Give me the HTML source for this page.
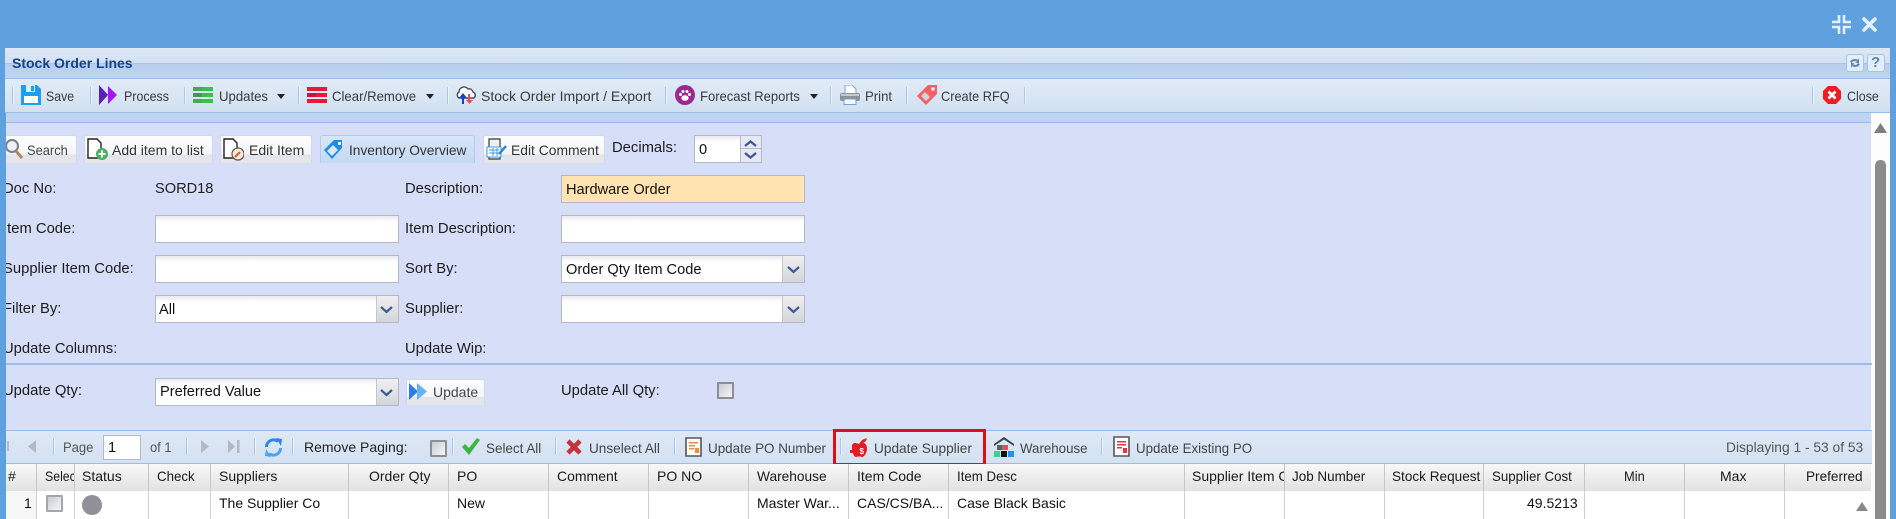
<!DOCTYPE html>
<html><head><meta charset="utf-8"><title>Stock Order Lines</title>
<style>
*{box-sizing:border-box}
html,body{margin:0;padding:0}
body{width:1896px;height:519px;position:relative;overflow:hidden;background:#5fa1df;font-family:"Liberation Sans",Arial,sans-serif;font-size:14px;color:#333}
div,span,svg{position:absolute}
.t{white-space:nowrap;line-height:18px;height:18px;transform-origin:0 50%}
.tb{color:#3b3b3b;font-size:14px}
.f{color:#1c1c1c;font-size:14.8px}
.v{color:#111;font-size:14.6px}
.h{color:#1a1a1a;font-size:14px;top:467px}
.r{color:#111;font-size:14px;top:494px}
.sep{width:1px;background:#a8c6ec;box-shadow:1px 0 0 #eef4fb}
.btn{top:135px;height:28px;border:1px solid #d3d9ea;border-bottom:0;border-radius:3px 3px 0 0;background:linear-gradient(#fdfdfe 0,#f4f5f8 68%,#e2e4ea 69%,#e6e7ea 100%)}
.inp{background:linear-gradient(#e8eaee 0,#fff 6px);border:1px solid #b5b8c8;height:28px}
.trg{width:22px;border-left:1px solid #c4c6cf;top:0;bottom:0;right:0;background:linear-gradient(#f0f0f1,#d4d5d9)}
.grid{top:464px;height:27px;background:linear-gradient(#f8f8f8,#e2e2e2);border-right:1px solid #c6c6c6}
.cell{top:491px;height:28px;background:#fff;border-right:1px solid #d0d0d0}
</style></head><body>

<!-- window chrome -->
<div style="left:5px;top:48px;width:1885px;height:1px;background:#dfeaf7"></div>
<div style="left:5px;top:49px;width:1885px;height:14px;background:linear-gradient(#dbe7f6,#d2e1f3)"></div>
<div style="left:5px;top:63px;width:1885px;height:15px;background:linear-gradient(#b8ceed,#c0d4f0);border-top:1px solid #a9c4e8"></div>
<div style="left:5px;top:78px;width:1885px;height:35px;background:linear-gradient(#e1ebf7,#d1e0f1);border-top:1px solid #99bdea;border-bottom:1px solid #99bdea"></div>
<div style="left:5px;top:113px;width:1867px;height:10px;background:#bfd4ef;border-bottom:1px solid #99bdea"></div>
<div style="left:6px;top:123px;width:1866px;height:307px;background:#d6def8"></div>
<div style="left:1871px;top:113px;width:19px;height:406px;background:#fdfdfd"></div>
<div class="t" style="left:12px;top:54px;font-weight:bold;font-size:14px;color:#15428b">Stock Order Lines</div>

<!-- title buttons -->
<div style="left:1846px;top:54px;width:18px;height:18px;border:1px solid #a9c4e8;border-radius:3px;background:#e4eefa"></div>
<svg style="left:1848px;top:56px" width="14" height="14" viewBox="0 0 14 14"><path d="M2 6a5 4 0 0 1 8-2l1-2v5H7l2-1a3 3 0 0 0-5 1z M12 8a5 4 0 0 1-8 2l-1 2V7h4L5 8a3 3 0 0 0 5-1z" fill="#5f86b8"/></svg>
<div style="left:1867px;top:54px;width:18px;height:18px;border:1px solid #a9c4e8;border-radius:3px;background:#e4eefa"></div>
<div class="t" style="left:1871px;top:54px;font-weight:bold;font-size:15px;color:#5f86b8">?</div>

<!-- top-right icons -->
<svg style="left:1832px;top:15px" width="19" height="19" viewBox="0 0 19 19"><path d="M7 0v7H0M12 0v7h7M7 19v-7H0M12 19v-7h7" fill="none" stroke="#e7f0fa" stroke-width="2.6"/></svg>
<svg style="left:1862px;top:17px" width="15" height="15" viewBox="0 0 15 15"><path d="M2 2l11 11M13 2L2 13" stroke="#e7f0fa" stroke-width="3.6" stroke-linecap="round"/></svg>

<!-- main toolbar -->
<div class="sep" style="left:12px;top:87px;height:17px"></div>
<div class="sep" style="left:90px;top:87px;height:17px"></div>
<div class="sep" style="left:184px;top:87px;height:17px"></div>
<div class="sep" style="left:298px;top:87px;height:17px"></div>
<div class="sep" style="left:447px;top:87px;height:17px"></div>
<div class="sep" style="left:665px;top:87px;height:17px"></div>
<div class="sep" style="left:830px;top:87px;height:17px"></div>
<div class="sep" style="left:906px;top:87px;height:17px"></div>
<div class="sep" style="left:1024px;top:87px;height:17px"></div>
<div class="sep" style="left:1812px;top:87px;height:17px"></div>

<svg style="left:21px;top:85px" width="20" height="20" viewBox="0 0 20 20"><path d="M0 0h16l4 4v16H0z" fill="#1f9df2"/><rect x="3" y="11" width="14" height="7" fill="#fff"/><rect x="5" y="0" width="9" height="7" fill="#d9effd"/><rect x="10" y="1" width="3" height="5" fill="#1f9df2"/></svg>
<span class="t tb" style="left:46px;top:87px;transform:scaleX(.88)">Save</span>
<svg style="left:99px;top:85px" width="18" height="20" viewBox="0 0 18 20"><path d="M0 0l9 10-9 10z" fill="#5a1fb8"/><path d="M9 1l9 9-9 9z" fill="#a516f0"/></svg>
<span class="t tb" style="left:124px;top:87px;transform:scaleX(.89)">Process</span>
<svg style="left:193px;top:87px" width="20" height="16" viewBox="0 0 20 16"><rect width="20" height="4" fill="#4fa65a"/><rect y="6" width="20" height="4" fill="#3e9a55"/><rect y="12" width="20" height="4" fill="#4fa65a"/><rect x="9" width="11" height="4" fill="#38c24b"/><rect x="9" y="6" width="11" height="4" fill="#38c24b"/><rect x="9" y="12" width="11" height="4" fill="#38c24b"/></svg>
<span class="t tb" style="left:219px;top:87px;transform:scaleX(.94)">Updates</span>
<svg style="left:277px;top:94px" width="8" height="5"><path d="M0 0h8L4 5z" fill="#222"/></svg>
<svg style="left:307px;top:87px" width="20" height="16" viewBox="0 0 20 16"><rect width="20" height="4" fill="#e31b3a"/><rect y="6" width="20" height="4" fill="#c91440"/><rect y="12" width="20" height="4" fill="#e31b3a"/><rect x="9" y="6" width="11" height="4" fill="#f0143a"/></svg>
<span class="t tb" style="left:332px;top:87px;transform:scaleX(.94)">Clear/Remove</span>
<svg style="left:426px;top:94px" width="8" height="5"><path d="M0 0h8L4 5z" fill="#222"/></svg>
<svg style="left:456px;top:86px" width="20" height="18" viewBox="0 0 20 18"><path d="M3 12a3.500 3.500 0 0 1 0-6 5 5 0 0 1 9-3 4 4 0 0 1 5 3 3.500 3.500 0 0 1 1 6z" fill="#fff" stroke="#4a4a55" stroke-width="1.400"/><path d="M6 18v-6H3l4-5 4 5H8v6z" fill="#1141d6"/><path d="M14 8v6h3l-3.500 4-3.500-4h2V8z" fill="#e94f5c"/></svg>
<span class="t tb" style="left:481px;top:87px">Stock Order Import / Export</span>
<svg style="left:675px;top:85px" width="20" height="20" viewBox="0 0 20 20"><circle cx="10" cy="10" r="10" fill="#9a2a8f"/><ellipse cx="10" cy="13" rx="3.600" ry="2.800" fill="#fff"/><circle cx="5.500" cy="9.500" r="1.500" fill="#fff"/><circle cx="14.500" cy="9.500" r="1.500" fill="#fff"/><circle cx="8" cy="6.500" r="1.500" fill="#fff"/><circle cx="12" cy="6.500" r="1.500" fill="#fff"/></svg>
<span class="t tb" style="left:700px;top:87px;transform:scaleX(.93)">Forecast Reports</span>
<svg style="left:810px;top:94px" width="8" height="5"><path d="M0 0h8L4 5z" fill="#222"/></svg>
<svg style="left:840px;top:85px" width="20" height="20" viewBox="0 0 20 20"><path d="M5 0h7l4 4v6H5z" fill="#fff" stroke="#6fa3dc"/><rect x="0" y="8" width="20" height="8" rx="2" fill="#8d9298"/><rect x="1" y="9" width="18" height="2" fill="#c6c9cd"/><path d="M4 14h12v5.500H4z" fill="#f4f6f8" stroke="#6fa3dc"/></svg>
<span class="t tb" style="left:865px;top:87px;transform:scaleX(.94)">Print</span>
<svg style="left:917px;top:85px" width="20" height="20" viewBox="0 0 20 20"><path d="M11 0h9v9L9 20 0 11z" fill="#f4606a"/><path d="M8 7l5 5-4 4-5-5z" fill="#d4d4d6"/><rect x="14.500" y="2.500" width="3" height="3" fill="#fff"/></svg>
<span class="t tb" style="left:941px;top:87px;transform:scaleX(.91)">Create RFQ</span>
<svg style="left:1823px;top:86px" width="18" height="18" viewBox="0 0 18 18"><path d="M5 0h8l5 5v8l-5 5H5l-5-5V5z" fill="#ee1c25"/><path d="M5.500 5.500l7 7M12.500 5.500l-7 7" stroke="#fff" stroke-width="2.800"/></svg>
<span class="t tb" style="left:1847px;top:87px;transform:scaleX(.89)">Close</span>

<!-- scrollbar -->
<svg style="left:1874px;top:123px" width="13" height="10"><path d="M0 10L6.500 0 13 10z" fill="#7f7f7f"/></svg>
<div style="left:1875px;top:160px;width:11px;height:359px;background:#8c8c8c;border-radius:5px 5px 0 0"></div>

<!-- form buttons -->
<div class="btn" style="left:4px;width:73px"></div>
<svg style="left:4px;top:138px" width="20" height="22" viewBox="0 0 20 22"><circle cx="8" cy="8" r="6" fill="#eef1f6" stroke="#77808f" stroke-width="2"/><path d="M12 13l6 7" stroke="#b08a5a" stroke-width="3"/></svg>
<span class="t" style="left:27px;top:141px;color:#444;font-size:14px;transform:scaleX(.92)">Search</span>
<div class="btn" style="left:84px;width:129px"></div>
<svg style="left:87px;top:138px" width="21" height="23" viewBox="0 0 21 23"><path d="M1 1h9l4 4v15H1z" fill="#fff" stroke="#222" stroke-width="1.400"/><circle cx="15" cy="16" r="6" fill="#4caf64"/><path d="M15 12.500v7M11.500 16h7" stroke="#fff" stroke-width="2"/></svg>
<span class="t" style="left:112px;top:141px;color:#333;font-size:14px">Add item to list</span>
<div class="btn" style="left:220px;width:92px"></div>
<svg style="left:223px;top:138px" width="21" height="23" viewBox="0 0 21 23"><path d="M1 1h9l4 4v15H1z" fill="#fff" stroke="#222" stroke-width="1.400"/><circle cx="15" cy="16" r="6" fill="#f1ece6" stroke="#6f5a4c" stroke-width="1.300"/><path d="M12 19l5-5" stroke="#e25b2b" stroke-width="2.200"/></svg>
<span class="t" style="left:249px;top:141px;color:#333;font-size:14px">Edit Item</span>
<div class="btn" style="left:320px;width:155px;background:linear-gradient(#d8e6f8,#c3d9f3);border-color:#b1cdee"></div>
<svg style="left:324px;top:138px" width="20" height="22" viewBox="0 0 20 22"><path d="M10 2h8v8L8 21 0 12z" fill="#1f8cec"/><path d="M9 7l5 5-6 6-5-5z" fill="#dfe8f2"/><rect x="14" y="4" width="3" height="3" fill="#fff"/></svg>
<span class="t" style="left:349px;top:141px;color:#333;font-size:14px;transform:scaleX(.98)">Inventory Overview</span>
<div class="btn" style="left:483px;width:122px"></div>
<svg style="left:486px;top:138px" width="21" height="23" viewBox="0 0 21 23"><path d="M3 1h11v20H3z" fill="#eef0f2" stroke="#555" stroke-width="1.400"/><rect x="1" y="9" width="14" height="10" fill="#fff" stroke="#3f9be8"/><path d="M3 12h10M3 15h10M7 10v8M11 10v8" stroke="#3f9be8"/><path d="M13 16l7-8" stroke="#2a7fdc" stroke-width="2.400"/></svg>
<span class="t" style="left:511px;top:141px;color:#333;font-size:14px;transform:scaleX(.99)">Edit Comment</span>
<span class="t f" style="left:612px;top:139px">Decimals:</span>
<div class="inp" style="left:694px;top:135px;width:68px"></div>
<span class="t v" style="left:699px;top:141px">0</span>
<div style="left:740px;top:136px;width:21px;height:26px;background:#e6e9f3;border-left:1px solid #b5b8c8"></div>
<div style="left:741px;top:148px;width:20px;height:1px;background:#b5b8c8"></div>
<svg style="left:744px;top:140px" width="13" height="7"><path d="M1 6l5.500-4.500L12 6" fill="none" stroke="#3e5a96" stroke-width="2.400"/></svg>
<svg style="left:744px;top:152px" width="13" height="7"><path d="M1 1l5.500 4.500L12 1" fill="none" stroke="#3e5a96" stroke-width="2.400"/></svg>

<!-- form labels -->
<span class="t f" style="left:3px;top:180px">Doc No:</span>
<span class="t v" style="left:155px;top:180px;color:#222">SORD18</span>
<span class="t f" style="left:405px;top:180px">Description:</span>
<div class="inp" style="left:561px;top:175px;width:244px;background:#ffe3b0"></div>
<span class="t v" style="left:566px;top:181px">Hardware Order</span>

<span class="t f" style="left:3px;top:220px">Item Code:</span>
<div class="inp" style="left:155px;top:215px;width:244px"></div>
<span class="t f" style="left:405px;top:220px">Item Description:</span>
<div class="inp" style="left:561px;top:215px;width:244px"></div>

<span class="t f" style="left:3px;top:260px">Supplier Item Code:</span>
<div class="inp" style="left:155px;top:255px;width:244px"></div>
<span class="t f" style="left:405px;top:260px">Sort By:</span>
<div class="inp" style="left:561px;top:255px;width:244px"><div class="trg"></div></div>
<svg style="left:787px;top:266px" width="13" height="8"><path d="M1 1l5.500 5L12 1" fill="none" stroke="#3e5a96" stroke-width="2.200"/></svg>
<span class="t v" style="left:566px;top:261px">Order Qty Item Code</span>

<span class="t f" style="left:3px;top:300px">Filter By:</span>
<div class="inp" style="left:155px;top:295px;width:244px"><div class="trg"></div></div>
<svg style="left:380px;top:306px" width="13" height="8"><path d="M1 1l5.500 5L12 1" fill="none" stroke="#3e5a96" stroke-width="2.200"/></svg>
<span class="t v" style="left:159px;top:301px">All</span>
<span class="t f" style="left:405px;top:300px">Supplier:</span>
<div class="inp" style="left:561px;top:295px;width:244px"><div class="trg"></div></div>
<svg style="left:787px;top:306px" width="13" height="8"><path d="M1 1l5.500 5L12 1" fill="none" stroke="#3e5a96" stroke-width="2.200"/></svg>

<span class="t f" style="left:3px;top:340px">Update Columns:</span>
<span class="t f" style="left:405px;top:340px">Update Wip:</span>
<div style="left:6px;top:363px;width:1866px;height:2px;background:#9dbde9"></div>

<span class="t f" style="left:3px;top:382px">Update Qty:</span>
<div class="inp" style="left:155px;top:378px;width:244px"><div class="trg"></div></div>
<svg style="left:380px;top:389px" width="13" height="8"><path d="M1 1l5.500 5L12 1" fill="none" stroke="#3e5a96" stroke-width="2.200"/></svg>
<span class="t v" style="left:160px;top:383px">Preferred Value</span>
<div class="btn" style="left:406px;top:379px;width:79px;height:26px"></div>
<svg style="left:409px;top:383px" width="19" height="17" viewBox="0 0 19 17"><path d="M0 0l9 8.500L0 17z" fill="#2f7de6"/><path d="M8 0l10 8.500L8 17z" fill="#69b1f7"/></svg>
<span class="t" style="left:433px;top:383px;color:#444;font-size:14px">Update</span>
<span class="t f" style="left:561px;top:382px">Update All Qty:</span>
<div style="left:717px;top:382px;width:17px;height:17px;background:linear-gradient(135deg,#c9ccd3,#f6f6f8);border:2px solid #8c8f95;border-radius:1px"></div>

<!-- paging toolbar -->
<div style="left:6px;top:430px;width:1866px;height:34px;background:linear-gradient(#dfe9f6,#d3e1f1);border-top:1px solid #99bdea;border-bottom:1px solid #99bdea"></div>
<div style="left:7px;top:441px;width:2px;height:10px;background:#b7bcc4"></div>
<svg style="left:28px;top:440px" width="8" height="13"><path d="M8 0v13L0 6.500z" fill="#b5bac2"/></svg>
<div class="sep" style="left:53px;top:438px;height:17px"></div>
<span class="t" style="left:63px;top:438px;color:#555;font-size:14px;transform:scaleX(.93)">Page</span>
<div style="left:103px;top:435px;width:38px;height:25px;background:#fff;border:1px solid #b5b8c8"></div>
<span class="t v" style="left:108px;top:439px">1</span>
<span class="t" style="left:150px;top:438px;color:#555;font-size:14px;transform:scaleX(.92)">of 1</span>
<div class="sep" style="left:186px;top:438px;height:17px"></div>
<svg style="left:201px;top:440px" width="8" height="13"><path d="M0 0v13l8-6.500z" fill="#b5bac2"/></svg>
<svg style="left:228px;top:440px" width="12" height="13"><path d="M0 0v13l7-6.500z" fill="#b5bac2"/><rect x="9" width="2.500" height="13" fill="#b5bac2"/></svg>
<div class="sep" style="left:254px;top:438px;height:17px"></div>
<svg style="left:264px;top:438px" width="19" height="19" viewBox="0 0 19 19"><path d="M2.500 9a7 7 0 0 1 11.500-5.500" fill="none" stroke="#2c86e3" stroke-width="3"/><path d="M12 0l6 1-1 7z" fill="#2c86e3"/><path d="M16.500 10a7 7 0 0 1-11.500 5.500" fill="none" stroke="#4aa3ee" stroke-width="3"/><path d="M7 19l-6-1 1-7z" fill="#4aa3ee"/></svg>
<div class="sep" style="left:292px;top:438px;height:17px"></div>
<span class="t" style="left:304px;top:438px;color:#222;font-size:14px">Remove Paging:</span>
<div style="left:430px;top:440px;width:17px;height:17px;background:linear-gradient(135deg,#c9ccd3,#f6f6f8);border:2px solid #8c8f95;border-radius:1px"></div>
<div class="sep" style="left:452px;top:438px;height:17px"></div>
<svg style="left:462px;top:438px" width="18" height="17" viewBox="0 0 18 17"><path d="M0 9l3-3 4 4 8-10 3 2L7 17z" fill="#3db53f"/></svg>
<span class="t" style="left:486px;top:439px;color:#444;font-size:14px;transform:scaleX(.96)">Select All</span>
<div class="sep" style="left:555px;top:438px;height:17px"></div>
<svg style="left:566px;top:439px" width="16" height="16" viewBox="0 0 16 16"><path d="M2 2l12 12M14 2L2 14" stroke="#c6333a" stroke-width="4.600"/></svg>
<span class="t" style="left:589px;top:439px;color:#444;font-size:14px;transform:scaleX(.97)">Unselect All</span>
<div class="sep" style="left:674px;top:438px;height:17px"></div>
<svg style="left:685px;top:437px" width="17" height="20" viewBox="0 0 17 20"><path d="M1 1h15v18H1z" fill="#fff" stroke="#555" stroke-width="1.600"/><path d="M4 5h9v1.500H4zM4 8h6v1.500H4zM4 11h5v1.500H4z" fill="#f2883b"/><rect x="10" y="11" width="4" height="5" fill="#f2883b"/></svg>
<span class="t" style="left:708px;top:439px;color:#444;font-size:14px;transform:scaleX(.96)">Update PO Number</span>
<div class="sep" style="left:840px;top:438px;height:17px"></div>
<svg style="left:850px;top:438px" width="18" height="19" viewBox="0 0 18 19"><path d="M5 5c2 0 3 1 4 1s2-1 4-1c3 0 4 3 4 6 0 4-3 8-5 8-1 0-2-.6-3-.6S7 19 6 19c-1.500 0-2.500-2-3-4H0v-3h2V8c0-2 1.500-3 3-3z" fill="#e31b23"/><path d="M9 6l3-4 5-2-1 3-4 3z" fill="#e31b23"/><text x="9.500" y="16" font-size="8" font-weight="bold" fill="#fff" font-family="Liberation Sans,sans-serif">$</text></svg>
<span class="t" style="left:874px;top:439px;color:#444;font-size:14px;transform:scaleX(.975)">Update Supplier</span>
<div style="left:833px;top:429px;width:153px;height:37px;border:3px solid #e00f17"></div>
<svg style="left:994px;top:437px" width="20" height="20" viewBox="0 0 20 20"><path d="M0 7L10 0l10 7v2L10 2.500 0 9z" fill="#3a4048"/><rect x="3" y="8" width="14" height="5" fill="#e4e6ea"/><rect x="8" y="8" width="6" height="5" fill="#ec4a5a"/><rect x="3" y="8" width="5" height="5" fill="#5a6068"/><rect x="0" y="14" width="6" height="6" fill="#35d58c"/><rect x="7" y="14" width="6" height="6" fill="#111"/><rect x="14" y="14" width="6" height="6" fill="#2f8fe8"/></svg>
<span class="t" style="left:1020px;top:439px;color:#444;font-size:14px;transform:scaleX(.95)">Warehouse</span>
<div class="sep" style="left:1101px;top:438px;height:17px"></div>
<svg style="left:1113px;top:436px" width="17" height="21" viewBox="0 0 17 21"><path d="M1 1h15v19H1z" fill="#fff" stroke="#555" stroke-width="1.600"/><path d="M4 5h9v1.500H4zM4 8h9v1.500H4zM4 11h5v1.500H4z" fill="#e8323c"/><rect x="10" y="12" width="4" height="5" fill="#e8323c"/></svg>
<span class="t" style="left:1136px;top:439px;color:#444;font-size:14px;transform:scaleX(.95)">Update Existing PO</span>
<span class="t" style="left:1726px;top:438px;color:#555;font-size:14px;transform:scaleX(.985)">Displaying 1 - 53 of 53</span>

<!-- grid header -->
<div class="grid" style="left:6px;width:31px"></div>
<div class="grid" style="left:37px;width:38px"></div>
<div class="grid" style="left:75px;width:74px"></div>
<div class="grid" style="left:149px;width:62px"></div>
<div class="grid" style="left:211px;width:138px"></div>
<div class="grid" style="left:349px;width:100px"></div>
<div class="grid" style="left:449px;width:100px"></div>
<div class="grid" style="left:549px;width:100px"></div>
<div class="grid" style="left:649px;width:100px"></div>
<div class="grid" style="left:749px;width:100px"></div>
<div class="grid" style="left:849px;width:100px"></div>
<div class="grid" style="left:949px;width:236px"></div>
<div class="grid" style="left:1185px;width:100px"></div>
<div class="grid" style="left:1285px;width:100px"></div>
<div class="grid" style="left:1385px;width:99px"></div>
<div class="grid" style="left:1484px;width:101px"></div>
<div class="grid" style="left:1585px;width:100px"></div>
<div class="grid" style="left:1685px;width:100px"></div>
<div class="grid" style="left:1785px;width:86px;border-right:0"></div>

<span class="t h" style="left:8px">#</span>
<span class="t h" style="left:45px;width:33px;overflow:hidden;transform:scaleX(.88)">Select</span>
<span class="t h" style="left:82px">Status</span>
<span class="t h" style="left:157px;transform:scaleX(.95)">Check</span>
<span class="t h" style="left:219px">Suppliers</span>
<span class="t h" style="left:369px">Order Qty</span>
<span class="t h" style="left:457px">PO</span>
<span class="t h" style="left:557px">Comment</span>
<span class="t h" style="left:657px">PO NO</span>
<span class="t h" style="left:757px;transform:scaleX(.98)">Warehouse</span>
<span class="t h" style="left:857px">Item Code</span>
<span class="t h" style="left:957px;transform:scaleX(.95)">Item Desc</span>
<span class="t h" style="left:1192px;width:92px;overflow:hidden">Supplier Item Code</span>
<span class="t h" style="left:1292px;transform:scaleX(.96)">Job Number</span>
<span class="t h" style="left:1392px;width:94px;overflow:hidden;transform:scaleX(.97)">Stock Request No</span>
<span class="t h" style="left:1492px;transform:scaleX(.95)">Supplier Cost</span>
<span class="t h" style="left:1624px;transform:scaleX(.92)">Min</span>
<span class="t h" style="left:1720px">Max</span>
<span class="t h" style="left:1806px;transform:scaleX(.97)">Preferred</span>

<!-- grid row -->
<div class="cell" style="left:6px;width:31px;background:#f6f6f6"></div>
<div class="cell" style="left:37px;width:38px"></div>
<div class="cell" style="left:75px;width:74px"></div>
<div class="cell" style="left:149px;width:62px"></div>
<div class="cell" style="left:211px;width:138px"></div>
<div class="cell" style="left:349px;width:100px"></div>
<div class="cell" style="left:449px;width:100px"></div>
<div class="cell" style="left:549px;width:100px"></div>
<div class="cell" style="left:649px;width:100px"></div>
<div class="cell" style="left:749px;width:100px"></div>
<div class="cell" style="left:849px;width:100px"></div>
<div class="cell" style="left:949px;width:236px"></div>
<div class="cell" style="left:1185px;width:100px"></div>
<div class="cell" style="left:1285px;width:100px"></div>
<div class="cell" style="left:1385px;width:99px"></div>
<div class="cell" style="left:1484px;width:101px"></div>
<div class="cell" style="left:1585px;width:100px"></div>
<div class="cell" style="left:1685px;width:100px"></div>
<div class="cell" style="left:1785px;width:86px;border-right:0"></div>

<span class="t r" style="left:24px">1</span>
<div style="left:46px;top:495px;width:17px;height:17px;background:linear-gradient(135deg,#c9ccd3,#f6f6f8);border:2px solid #a3a6ad;border-radius:1px"></div>
<div style="left:82px;top:495px;width:20px;height:20px;border-radius:50%;background:#909096"></div>
<span class="t r" style="left:219px">The Supplier Co</span>
<span class="t r" style="left:457px">New</span>
<span class="t r" style="left:757px">Master War...</span>
<span class="t r" style="left:857px">CAS/CS/BA...</span>
<span class="t r" style="left:957px">Case Black Basic</span>
<span class="t r" style="left:1527px">49.5213</span>
<svg style="left:1856px;top:502px" width="12" height="9"><path d="M0 9L6 0l6 9z" fill="#888"/></svg>

<!-- left blue strip -->
<div style="left:0;top:113px;width:6px;height:406px;background:#5fa1df"></div>
</body></html>
